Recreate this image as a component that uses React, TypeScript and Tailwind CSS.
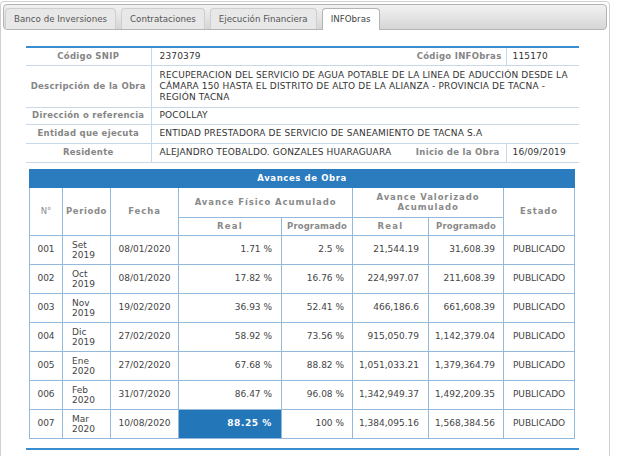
import React from 'react';

type Avance = {
  n: string;
  mes: string;
  anio: string;
  fecha: string;
  fisReal: string;
  fisProg: string;
  valReal: string;
  valProg: string;
  estado: string;
};

const avances: Avance[] = [
  { n: '001', mes: 'Set', anio: '2019', fecha: '08/01/2020', fisReal: '1.71 %', fisProg: '2.5 %', valReal: '21,544.19', valProg: '31,608.39', estado: 'PUBLICADO' },
  { n: '002', mes: 'Oct', anio: '2019', fecha: '08/01/2020', fisReal: '17.82 %', fisProg: '16.76 %', valReal: '224,997.07', valProg: '211,608.39', estado: 'PUBLICADO' },
  { n: '003', mes: 'Nov', anio: '2019', fecha: '19/02/2020', fisReal: '36.93 %', fisProg: '52.41 %', valReal: '466,186.6', valProg: '661,608.39', estado: 'PUBLICADO' },
  { n: '004', mes: 'Dic', anio: '2019', fecha: '27/02/2020', fisReal: '58.92 %', fisProg: '73.56 %', valReal: '915,050.79', valProg: '1,142,379.04', estado: 'PUBLICADO' },
  { n: '005', mes: 'Ene', anio: '2020', fecha: '27/02/2020', fisReal: '67.68 %', fisProg: '88.82 %', valReal: '1,051,033.21', valProg: '1,379,364.79', estado: 'PUBLICADO' },
  { n: '006', mes: 'Feb', anio: '2020', fecha: '31/07/2020', fisReal: '86.47 %', fisProg: '96.08 %', valReal: '1,342,949.37', valProg: '1,492,209.35', estado: 'PUBLICADO' },
  { n: '007', mes: 'Mar', anio: '2020', fecha: '10/08/2020', fisReal: '88.25 %', fisProg: '100 %', valReal: '1,384,095.16', valProg: '1,568,384.56', estado: 'PUBLICADO' },
];

const tabs = ['Banco de Inversiones', 'Contrataciones', 'Ejecución Financiera', 'INFObras'];

const lbl = 'font-bold text-[#858585] tracking-[0.3px] text-[8.5px]';
const th = 'border border-[#93b9dc] font-bold text-[#8a8a8a] text-[8.5px] text-center align-middle';
const td = 'border border-[#93b9dc] align-middle';

function InfoTable() {
  return (
    <table className="w-[553px] table-fixed border-collapse border-t-2 border-t-[#3a8fd3] text-[#333]">
      <colgroup>
        <col className="w-[125px]" />
        <col />
        <col className="w-[73px]" />
      </colgroup>
      <tbody className="tracking-[0.15px]">
        <tr className="h-[18px] border-b border-[#c7d8e8]">
          <td className={`${lbl} text-center`}>Código SNIP</td>
          <td className="border-l border-[#c7d8e8] pl-[8px]">
            <div className="flex justify-between">
              <span>2370379</span>
              <span className={`${lbl} pr-[4px]`}>Código INFObras</span>
            </div>
          </td>
          <td className="border-l border-[#c7d8e8] pl-[6px]">115170</td>
        </tr>
        <tr className="h-[42px] border-b border-[#c7d8e8]">
          <td className={`${lbl} text-center`}>Descripción de la Obra</td>
          <td colSpan={2} className="border-l border-[#c7d8e8] pl-[8px] pr-[6px] py-[3px]">
            RECUPERACION DEL SERVICIO DE AGUA POTABLE DE LA LINEA DE ADUCCIÓN DESDE LA CÁMARA 150 HASTA EL DISTRITO DE ALTO DE LA ALIANZA - PROVINCIA DE TACNA - REGIÓN TACNA
          </td>
        </tr>
        <tr className="h-[17px] border-b border-[#c7d8e8]">
          <td className={`${lbl} text-center`}>Dirección o referencia</td>
          <td colSpan={2} className="border-l border-[#c7d8e8] pl-[8px]">POCOLLAY</td>
        </tr>
        <tr className="h-[19px] border-b border-[#c7d8e8]">
          <td className={`${lbl} text-center`}>Entidad que ejecuta</td>
          <td colSpan={2} className="border-l border-[#c7d8e8] pl-[8px]">ENTIDAD PRESTADORA DE SERVICIO DE SANEAMIENTO DE TACNA S.A</td>
        </tr>
        <tr className="h-[19px] border-b border-[#c7d8e8]">
          <td className={`${lbl} text-center`}>Residente</td>
          <td className="border-l border-[#c7d8e8] pl-[8px]">
            <div className="flex justify-between">
              <span>ALEJANDRO TEOBALDO. GONZALES HUARAGUARA</span>
              <span className={`${lbl} pr-[6px]`}>Inicio de la Obra</span>
            </div>
          </td>
          <td className="border-l border-[#c7d8e8] pl-[6px]">16/09/2019</td>
        </tr>
      </tbody>
    </table>
  );
}

function AvancesTable() {
  return (
    <table className="w-[545px] table-fixed border-collapse text-[#444]">
      <colgroup>
        <col className="w-[33px]" />
        <col className="w-[48px]" />
        <col className="w-[68px]" />
        <col className="w-[103px]" />
        <col className="w-[71px]" />
        <col className="w-[76px]" />
        <col className="w-[75px]" />
        <col className="w-[71px]" />
      </colgroup>
      <thead>
        <tr className="h-[18px]">
          <th colSpan={8} className="bg-[#2b7cbf] border border-[#2b7cbf] text-white font-bold tracking-[0.6px] text-[8.5px] text-center">
            Avances de Obra
          </th>
        </tr>
        <tr className="h-[30px]">
          <th rowSpan={2} className={`${th} font-normal`}>N°</th>
          <th rowSpan={2} className={`${th} tracking-[0.6px]`}>Periodo</th>
          <th rowSpan={2} className={`${th} tracking-[0.9px]`}>Fecha</th>
          <th colSpan={2} className={`${th} tracking-[0.9px]`}>Avance Físico Acumulado</th>
          <th colSpan={2} className={`${th} tracking-[0.9px] px-[14px] leading-[10px]`}>Avance Valorizado Acumulado</th>
          <th rowSpan={2} className={`${th} tracking-[0.9px]`}>Estado</th>
        </tr>
        <tr className="h-[18px]">
          <th className={`${th} tracking-[1.2px]`}>Real</th>
          <th className={`${th} tracking-[0.1px]`}>Programado</th>
          <th className={`${th} tracking-[1.2px]`}>Real</th>
          <th className={`${th} tracking-[0.1px]`}>Programado</th>
        </tr>
      </thead>
      <tbody>
        {avances.map((a, i) => {
          const last = i === avances.length - 1;
          return (
            <tr key={a.n} className="h-[29px]">
              <td className={`${td} text-center`}>{a.n}</td>
              <td className={`${td} pl-[9px] leading-[10px]`}>
                {a.mes}
                <br />
                {a.anio}
              </td>
              <td className={`${td} text-center`}>{a.fecha}</td>
              <td
                className={
                  last
                    ? `${td} text-right pr-[9px] bg-[#2377b9] text-white font-bold tracking-[0.6px]`
                    : `${td} text-right pr-[9px]`
                }
              >
                {a.fisReal}
              </td>
              <td className={`${td} text-right pr-[8px]`}>{a.fisProg}</td>
              <td className={`${td} text-right pr-[9px]`}>{a.valReal}</td>
              <td className={`${td} text-right pr-[8px]`}>{a.valProg}</td>
              <td className={`${td} text-center`}>{a.estado}</td>
            </tr>
          );
        })}
      </tbody>
    </table>
  );
}

export default function App() {
  return (
    <div className="w-[620px] h-[456px] bg-white font-['DejaVu_Sans',sans-serif] text-[9px] leading-[11px] overflow-hidden">
      <div className="w-[610px] h-[470px] mt-px border border-[#d0d0d0] rounded-[4px] p-[2px] bg-white">
        {/* tab strip */}
        <div className="h-[26px] border border-[#b4b4b4] rounded-[4px] bg-gradient-to-b from-[#f2f2f2] to-[#d6d6d6] flex items-end gap-[5px] pl-[1px]">
          {tabs.map((t) => {
            const active = t === 'INFObras';
            return (
              <div
                key={t}
                className={
                  active
                    ? 'h-[22px] -mb-px px-[8px] flex items-center rounded-t-[4px] border border-b-0 border-[#b4b4b4] bg-white text-[#444] text-[8.7px]'
                    : 'h-[21px] px-[8px] flex items-center rounded-t-[4px] border border-b-0 border-[#cfcfcf] bg-[#e8e8e8] text-[#555] text-[8.7px]'
                }
              >
                {t}
              </div>
            );
          })}
        </div>
        {/* obra detail */}
        <div className="pl-[23px] pt-[16px] flex flex-col">
          <InfoTable />
          <div className="pl-[3px] pt-[6px]">
            <AvancesTable />
          </div>
          <div className="w-[553px] h-[2px] mt-[9px] bg-[#3a8fd3]" />
        </div>
      </div>
    </div>
  );
}
